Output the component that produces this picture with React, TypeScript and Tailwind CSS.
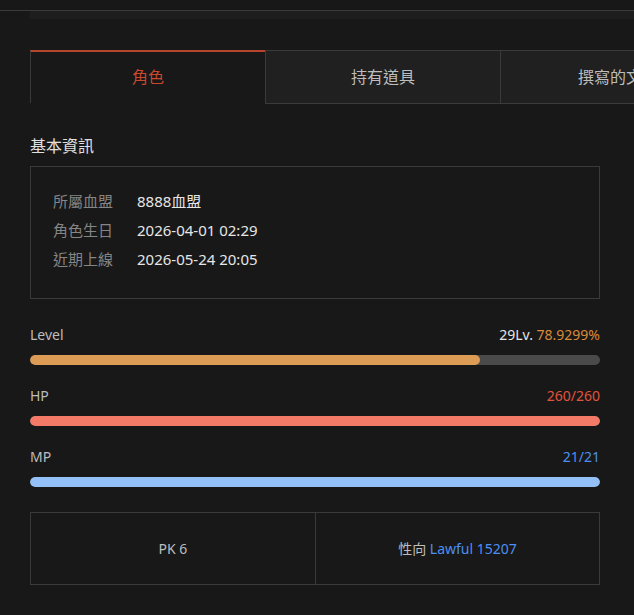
import React from "react";

const font = { fontFamily: '"Noto Sans", "Noto Sans CJK TC", sans-serif' };

function Bar({ label, right, pct, color }: { label: string; right: React.ReactNode; pct: number; color: string }) {
  return (
    <div className="flex flex-col">
      <div className="flex items-center justify-between h-[20px] text-[14px] leading-[20px]">
        <span className="text-[#bdbdbd]">{label}</span>
        <span>{right}</span>
      </div>
      <div className="mt-[10px] h-[10px] w-full rounded-full bg-[#4a4a4a] overflow-hidden">
        <div className="h-full rounded-full" style={{ width: `${pct}%`, background: color }} />
      </div>
    </div>
  );
}

export default function App() {
  return (
    <div className="min-h-[615px] w-[634px] overflow-hidden bg-[#181818]" style={font}>
      <div className="h-[10px]" />
      <div className="border-t border-[#3a3a3a]">
        <div className="ml-[30px] h-[8px] bg-[#1e1e1e]" />
      </div>
      <div className="px-[30px]">
        <div className="mt-[31px] flex w-[706px]">
          <div className="flex h-[53px] w-[235px] shrink-0 items-center justify-center border-t-2 border-l border-t-[#b5452c] border-l-[#3a3a3a] pb-[2px] text-[16px] text-[#c9492f]">
            角色
          </div>
          <div className="flex h-[54px] w-[236px] shrink-0 items-center justify-center border border-[#3a3a3a] bg-[#202020] pb-[1px] text-[16px] text-[#bdbdbd]">
            持有道具
          </div>
          <div className="flex h-[54px] w-[235px] shrink-0 items-center justify-center border border-l-0 border-[#3a3a3a] bg-[#202020] pb-[1px] text-[16px] text-[#bdbdbd]">
            撰寫的文章
          </div>
        </div>
        <div className="mt-[31px] text-[16px] leading-[22px] text-[#e0e0e0]">基本資訊</div>
        <div className="mt-[9px] h-[133px] w-[570px] border border-[#3a3a3a] px-[22px] pt-[23px]">
          <div className="flex flex-col gap-[7px] text-[15px] leading-[22px]">
            <div className="flex"><span className="w-[84px] text-[#858585]">所屬血盟</span><span className="text-[#e6e6e6]">8888血盟</span></div>
            <div className="flex"><span className="w-[84px] text-[#858585]">角色生日</span><span className="text-[#e6e6e6]">2026-04-01 02:29</span></div>
            <div className="flex"><span className="w-[84px] text-[#858585]">近期上線</span><span className="text-[#e6e6e6]">2026-05-24 20:05</span></div>
          </div>
        </div>
        <div className="mt-[26px] flex w-[570px] flex-col gap-[21px]">
          <Bar
            label="Level"
            pct={78.9299}
            color="#dc9c55"
            right={<><span className="text-[#e6e6e6]">29Lv.</span> <span className="text-[#d98a3a]">78.9299%</span></>}
          />
          <Bar label="HP" pct={100} color="#f27a66" right={<span className="text-[#e0533d]">260/260</span>} />
          <Bar label="MP" pct={100} color="#93c0f6" right={<span className="text-[#4c8ff0]">21/21</span>} />
        </div>
        <div className="mt-[25px] flex h-[73px] w-[570px] border border-[#3a3a3a] text-[14px]">
          <div className="flex w-[285px] items-center justify-center border-r border-[#3a3a3a] text-[#bdbdbd]">PK 6</div>
          <div className="flex flex-1 items-center justify-center text-[#bdbdbd]">
            性向&nbsp;<span className="text-[#4c8ff0]">Lawful 15207</span>
          </div>
        </div>
      </div>
    </div>
  );
}
